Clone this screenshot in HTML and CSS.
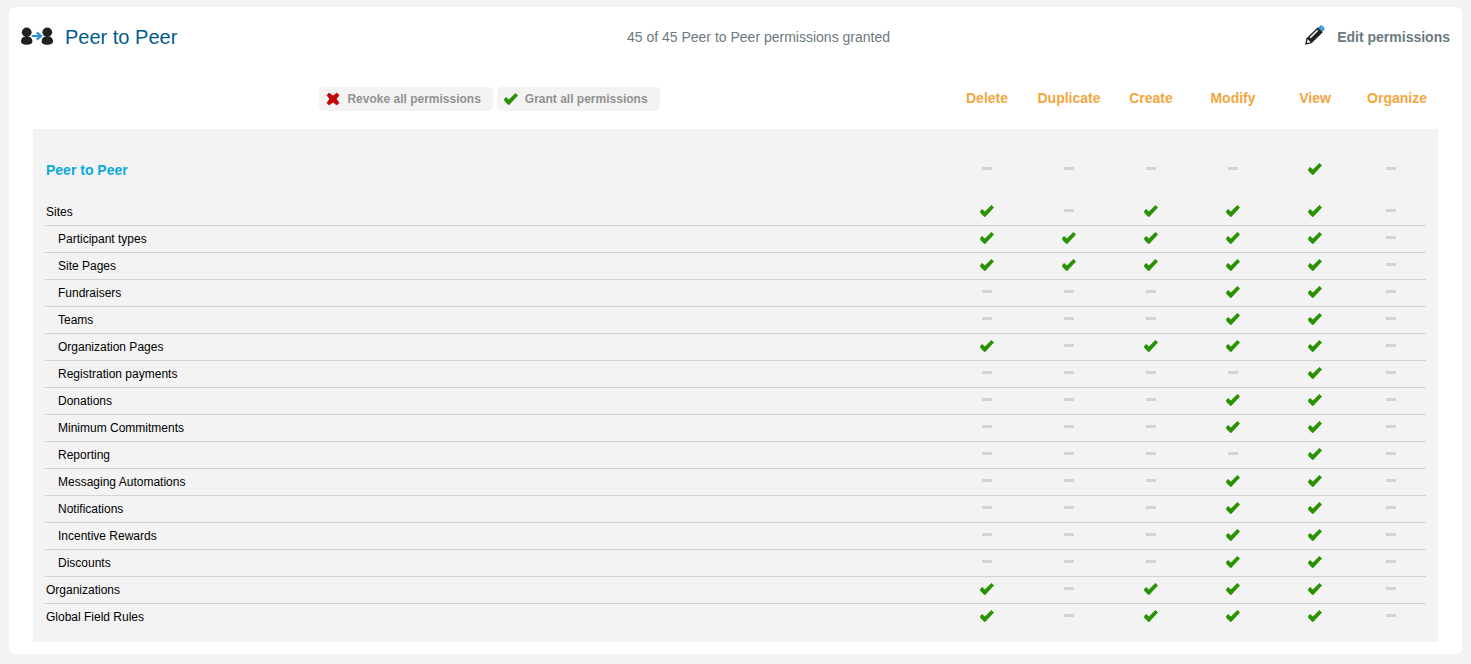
FILE: index.html
```html
<!DOCTYPE html>
<html lang="en">
<head>
<meta charset="utf-8">
<title>Peer to Peer permissions</title>
<link rel="stylesheet" href="styles.css">
</head>
<body>
<svg class="sprite" aria-hidden="true">
  <symbol id="check" viewBox="0 0 14 14"><path d="M0 6.200 2.100 4.100 4.900 6.500 11.400 0 14 2.600 5.200 11.900 4.100 11.700 .4 8Z" fill="#2a9305"/></symbol>
  <symbol id="dash" viewBox="0 0 14 14"><path d="M2 4H12V7H2Z" fill="#d4d4d4"/></symbol>
</svg>
<main class="card">
  <header class="card-header">
    <div class="heading">
      <svg class="peers" viewBox="0 0 32 20" aria-hidden="true">
        <g fill="#222"><ellipse cx="5.700" cy="5.300" rx="4.900" ry="4.700"/><path d="M0 14.500C0 11.300 2 9.200 5.700 9.200S11.400 11.300 11.400 14.500C11.400 16.800 9 17.800 5.700 17.800S0 16.800 0 14.500Z"/><ellipse cx="26.300" cy="5.300" rx="4.900" ry="4.700"/><path d="M20.600 14.500C20.600 11.300 22.500 9.200 26.300 9.200S32 11.300 32 14.500C32 16.800 29.500 17.800 26.300 17.800S20.600 16.800 20.600 14.500Z"/></g>
        <path d="M10.700 9H20M15.800 5.300 20 9 15.800 12.700" fill="none" stroke="#2d8fd5" stroke-width="2.200"/>
      </svg>
      <h1 class="title">Peer to Peer</h1>
    </div>
    <p class="summary">45 of 45 Peer to Peer permissions granted</p>
    <a class="edit" href="#">
      <svg class="pencil" viewBox="0 0 20 20" aria-hidden="true">
        <path d="M0 19.800 1.500 13.300 12.800 2.200 17.800 7.200 6.600 18.300Z" fill="#222"/>
        <path d="M2.700 14.200 5.700 17.200 1.900 18Z" fill="#fff"/>
        <path d="M5.200 12.800 12.700 5.300" stroke="#fff" stroke-width="1.600"/>
        <path d="M13.300 2.700 15.200 .8Q16.200-.2 17.200 .8L19.200 2.800Q20.200 3.800 19.200 4.800L17.300 6.700Z" fill="#2d8fd5"/>
        <circle cx="16.900" cy="3.100" r=".9" fill="#9dcbec"/>
      </svg>
      <span>Edit permissions</span>
    </a>
  </header>
  <table class="permissions">
    <thead>
      <tr>
        <th class="actions">
          <div class="buttons">
            <button class="bulk" type="button"><svg class="mark" viewBox="0 0 14 14" aria-hidden="true"><path d="M1 3.200 3.200 1 7 4.100 10.800 1 13 3.200 10.100 7 13 10.800 10.800 13 7 9.900 3.200 13 1 10.800 3.900 7Z" fill="#c90606" stroke="#c90606" stroke-width=".8" stroke-linejoin="round"/></svg>Revoke all permissions</button>
            <button class="bulk" type="button"><svg class="mark" viewBox="0 -1 14 14" aria-hidden="true"><path d="M0 6.200 2.100 4.100 4.900 6.500 11.400 0 14 2.600 5.200 11.900 4.100 11.700 .4 8Z" fill="#2a9305"/></svg>Grant all permissions</button>
          </div>
        </th>
        <th scope="col">Delete</th><th scope="col">Duplicate</th><th scope="col">Create</th><th scope="col">Modify</th><th scope="col">View</th><th scope="col">Organize</th>
      </tr>
    </thead>
    <tbody id="rows"></tbody>
  </table>
</main>
<script src="app.js"></script>
</body>
</html>
```
FILE: styles.css
```css
* { box-sizing: border-box; }
body {
  margin: 0;
  padding: 7px 9px 10px;
  background: #f3f3f3;
  color: #000;
  font-family: "Liberation Sans", Arial, sans-serif;
  font-size: 12px;
}
.sprite { position: absolute; width: 0; height: 0; }
.card {
  background: #fff;
  border-radius: 6px;
  padding: 0 24px 12px;
}
.card-header {
  display: grid;
  grid-template-columns: 1fr auto 1fr;
  align-items: center;
  height: 60px;
  margin: 0 -12px;
}
.heading { display: flex; align-items: center; gap: 12px; }
.peers { width: 32px; height: 20px; }
.title {
  margin: 0;
  color: #005b8d;
  font-size: 20px;
  font-weight: normal;
  line-height: 24px;
}
.summary {
  margin: 0;
  padding-left: 46px;
  color: #6b7980;
  font-size: 14px;
}
.edit {
  display: flex;
  align-items: center;
  justify-self: end;
  gap: 12px;
  color: #6b7980;
  font-size: 14px;
  font-weight: bold;
  text-decoration: none;
}
.pencil { width: 20px; height: 20px; margin-bottom: 4px; }
.permissions {
  width: 100%;
  table-layout: fixed;
  border-collapse: collapse;
}
.permissions thead th {
  width: 82px;
  height: 62px;
  padding: 0;
  color: #f2a640;
  font-size: 14px;
  text-align: center;
}
.permissions thead .actions { width: auto; padding-top: 2px; }
.buttons { display: flex; justify-content: center; gap: 4px; }
.bulk {
  display: flex;
  align-items: center;
  gap: 7px;
  height: 24px;
  padding: 0 12px 0 7px;
  border: 0;
  border-radius: 5px;
  background: #f3f3f3;
  color: #929292;
  font: bold 12px "Liberation Sans", Arial, sans-serif;
}
.mark { width: 14px; height: 14px; }
.permissions tbody { background: #f3f3f3; }
.permissions tbody tr {
  background: linear-gradient(#d3d3d3, #d3d3d3) 12px 100% / calc(100% - 24px) 1px no-repeat;
}
.permissions tbody th {
  height: 27px;
  padding: 6px 0 6px 13px;
  font-weight: normal;
  line-height: 15px;
  text-align: left;
}
.permissions tbody .child th { padding-left: 25px; }
.permissions tbody td { padding: 6px 0 0; vertical-align: top; }
.permissions tbody td:last-child { padding-right: 12px; }
.permissions tbody .section,
.permissions tbody tr:last-child { background: none; }
.permissions tbody .section th {
  height: 70px;
  padding-top: 12px;
  padding-bottom: 0;
  color: #0aa9d8;
  font-size: 14px;
  font-weight: bold;
}
.permissions tbody .section td { padding-top: 34px; }
.permissions tbody tr:last-child th { padding-bottom: 17px; }
.state { display: block; width: 14px; height: 14px; margin: 0 auto; }
```
FILE: app.js
```js
// Each flag string lists Delete, Duplicate, Create, Modify, View, Organize.
const permissions = [
  ["Peer to Peer", "section", "000010"],
  ["Sites", "parent", "101110"],
  ["Participant types", "child", "111110"],
  ["Site Pages", "child", "111110"],
  ["Fundraisers", "child", "000110"],
  ["Teams", "child", "000110"],
  ["Organization Pages", "child", "101110"],
  ["Registration payments", "child", "000010"],
  ["Donations", "child", "000110"],
  ["Minimum Commitments", "child", "000110"],
  ["Reporting", "child", "000010"],
  ["Messaging Automations", "child", "000110"],
  ["Notifications", "child", "000110"],
  ["Incentive Rewards", "child", "000110"],
  ["Discounts", "child", "000110"],
  ["Organizations", "parent", "101110"],
  ["Global Field Rules", "parent", "101110"]
];
document.getElementById("rows").innerHTML = permissions.map(([name, level, flags]) =>
  `<tr class="${level}"><th scope="row">${name}</th>` +
  [...flags].map(flag => flag === "1"
    ? '<td><svg class="state" role="img" aria-label="Granted"><use href="#check"/></svg></td>'
    : '<td><svg class="state" role="img" aria-label="Not available"><use href="#dash"/></svg></td>'
  ).join("") + "</tr>"
).join("");
```
